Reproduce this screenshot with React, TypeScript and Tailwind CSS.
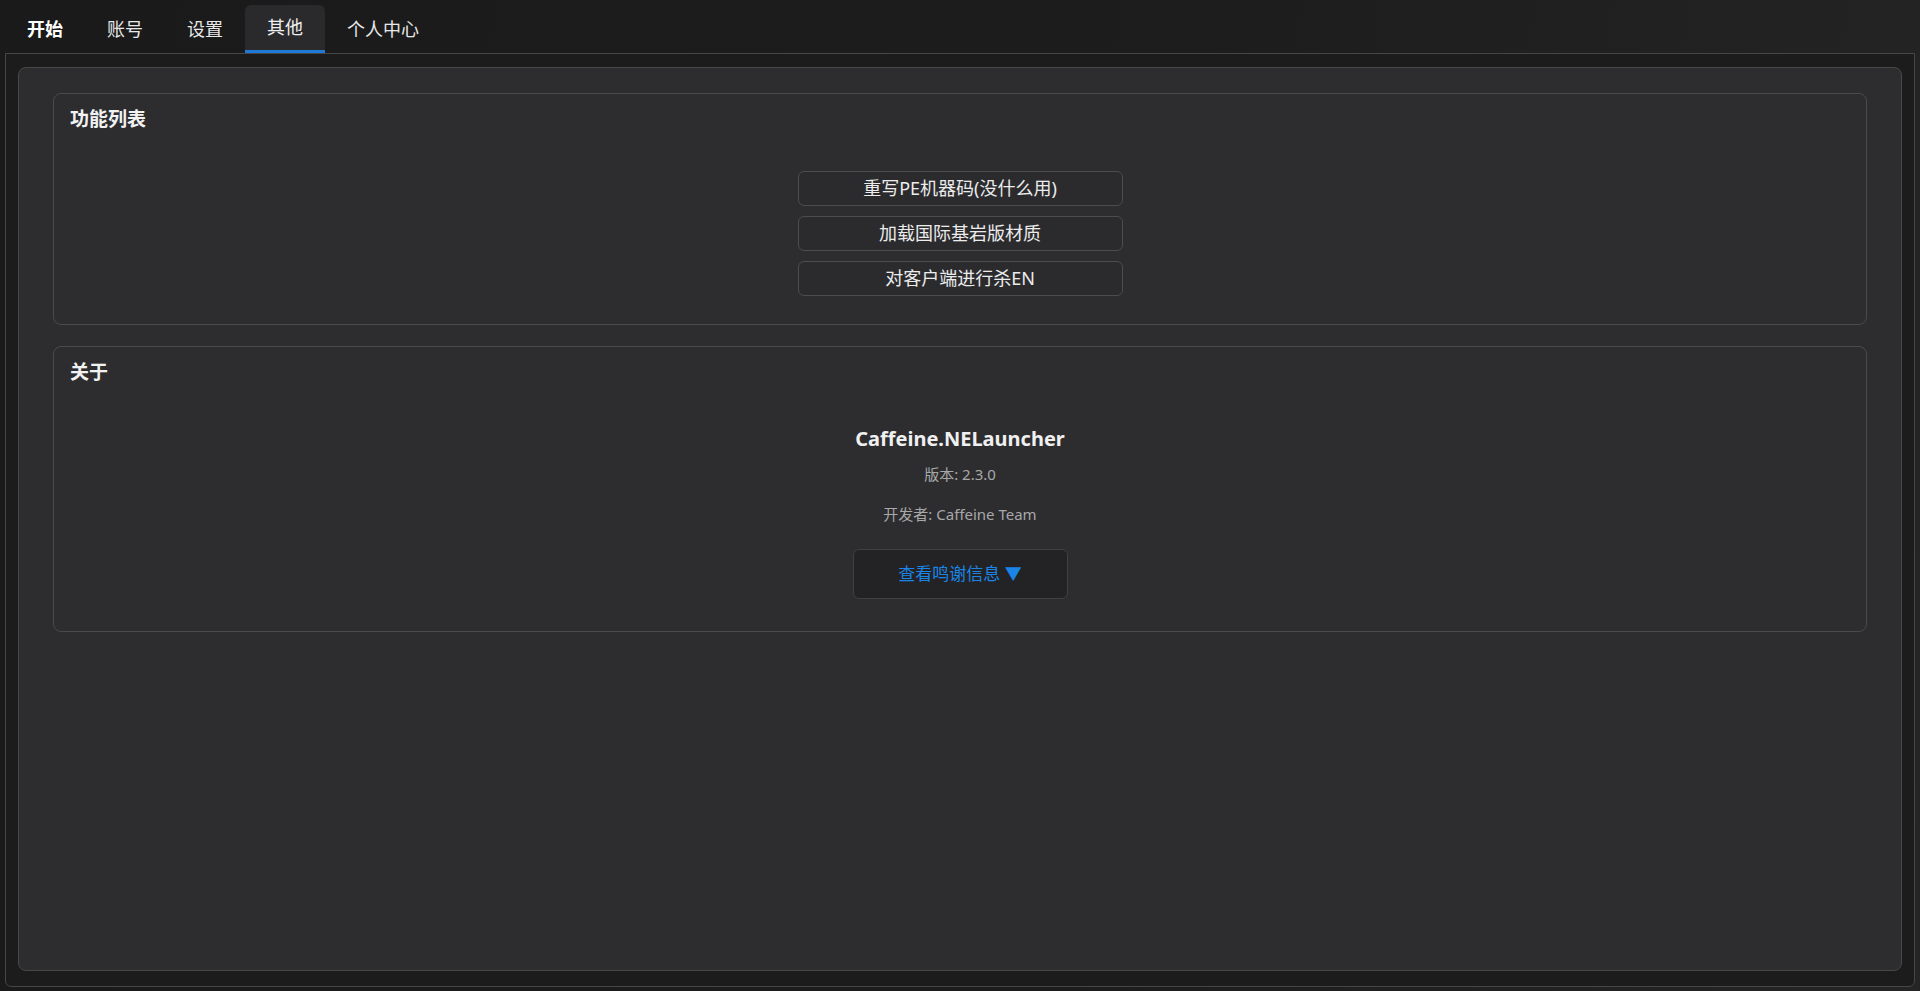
import React, { useState } from "react";

const tabs = ["开始", "账号", "设置", "其他", "个人中心"];

const features = ["重写PE机器码(没什么用)", "加载国际基岩版材质", "对客户端进行杀EN"];

const App = () => {
    const [active, setActive] = useState(3);
    return (
        <div
            className="w-full h-[991px] flex flex-col bg-[linear-gradient(100deg,#1a1a1a_0%,#1d1d1d_60%,#252525_100%)] text-[#e8e8e8]"
            style={{ fontFamily: '"Noto Sans", "Noto Sans CJK SC", sans-serif' }}
        >
            {/* tab bar */}
            <div className="flex flex-row pl-[5px] pt-[5px] h-[53px]">
                {tabs.map((t, i) => (
                    <button
                        key={t}
                        type="button"
                        onClick={() => setActive(i)}
                        className={
                            i === active
                                ? "px-[22px] text-[18px] rounded-t-md bg-[#2a2a2d] border-b-[3px] border-[#1e7ad6] text-[#f0f0f0]"
                                : i === 0
                                ? "px-[22px] text-[18px] font-bold text-white"
                                : "px-[22px] text-[18px] text-[#e8e8e8]"
                        }
                    >
                        {t}
                    </button>
                ))}
            </div>

            {/* outer frame */}
            <div className="flex-1 mx-[5px] mb-[4px] border border-[#464646] rounded-b-md bg-[#1c1c1c] px-[12px] pt-[13px] pb-[15px] flex">
                <div className="flex-1 rounded-lg border border-[#484848] bg-[#2d2d30] px-[34px] pt-[25px] flex flex-col gap-[21px]">
                    {/* 功能列表 */}
                    <div className="rounded-lg border border-[#4a4a4c] px-4 pt-[12px] pb-[28px]">
                        <h3 className="text-[19px] font-bold text-[#f2f2f2] leading-[26px]">功能列表</h3>
                        <div className="flex flex-col items-center gap-[10px] mt-[39px]">
                            {features.map((f) => (
                                <button
                                    key={f}
                                    type="button"
                                    className="w-[325px] h-[35px] rounded-md border border-[#4d4d50] bg-[#2b2b2e] text-[18px] text-[#ececec] flex items-center justify-center"
                                >
                                    {f}
                                </button>
                            ))}
                        </div>
                    </div>

                    {/* 关于 */}
                    <div className="rounded-lg border border-[#4a4a4c] px-4 pt-[12px] pb-[32px]">
                        <h3 className="text-[19px] font-bold text-[#f2f2f2] leading-[26px]">关于</h3>
                        <div className="flex flex-col items-center mt-[40px]">
                            <h2 className="text-[20px] font-bold text-[#f0f0f0] leading-[28px]">Caffeine.NELauncher</h2>
                            <p className="text-[15px] text-[#a8a8a8] mt-[10px]">版本: 2.3.0</p>
                            <p className="text-[15px] text-[#a8a8a8] mt-[17px]">开发者: Caffeine Team</p>
                            <button
                                type="button"
                                className="mt-[24px] w-[215px] h-[50px] rounded-md border border-[#404043] bg-[#232325] text-[17px] text-[#1a85e6] flex items-center justify-center"
                            >
                                查看鸣谢信息 ▼
                            </button>
                        </div>
                    </div>
                </div>
            </div>
        </div>
    );
};

export default App;
